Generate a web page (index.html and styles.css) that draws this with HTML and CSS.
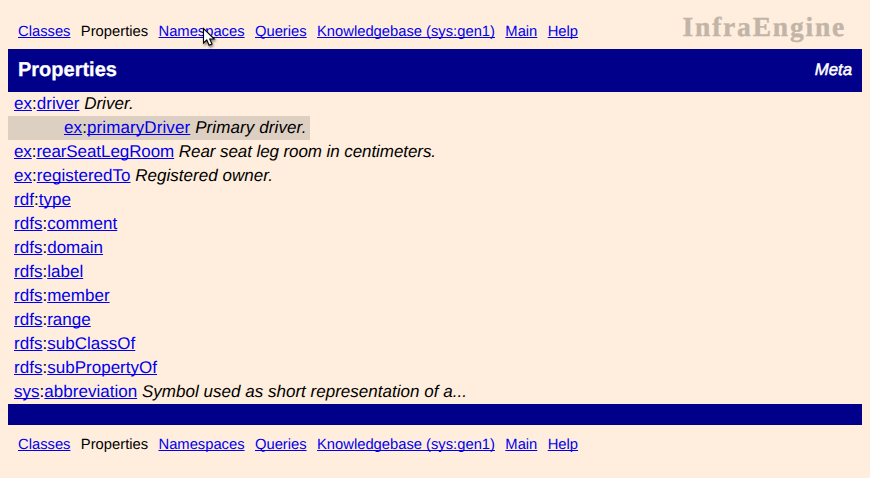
FILE: index.html
```html
<!DOCTYPE html>
<html lang="en">
<head>
<meta charset="utf-8">
<title>Properties</title>
<link rel="stylesheet" href="styles.css">
</head>
<body>
<header class="top">
<nav class="nav"><a href="#">Classes</a><span>Properties</span><a href="#">Namespaces</a><a href="#">Queries</a><a href="#">Knowledgebase (sys:gen1)</a><a href="#">Main</a><a href="#">Help</a></nav>
<div class="logo">InfraEngine</div>
</header>
<div class="title"><h1>Properties</h1><span class="meta">Meta</span></div>
<main class="list">
<div class="row"><a href="#">ex</a>:<a href="#">driver</a> <i>Driver.</i></div>
<div class="row sub"><a href="#">ex</a>:<a href="#">primaryDriver</a> <i>Primary driver.</i></div>
<div class="row tight"><a href="#">ex</a>:<a href="#">rearSeatLegRoom</a> <i>Rear seat leg room in centimeters.</i></div>
<div class="row"><a href="#">ex</a>:<a href="#">registeredTo</a> <i>Registered owner.</i></div>
<div class="row"><a href="#">rdf</a>:<a href="#">type</a></div>
<div class="row"><a href="#">rdfs</a>:<a href="#">comment</a></div>
<div class="row"><a href="#">rdfs</a>:<a href="#">domain</a></div>
<div class="row"><a href="#">rdfs</a>:<a href="#">label</a></div>
<div class="row"><a href="#">rdfs</a>:<a href="#">member</a></div>
<div class="row"><a href="#">rdfs</a>:<a href="#">range</a></div>
<div class="row"><a href="#">rdfs</a>:<a href="#">subClassOf</a></div>
<div class="row"><a href="#">rdfs</a>:<a href="#">subPropertyOf</a></div>
<div class="row"><a href="#">sys</a>:<a href="#">abbreviation</a> <i>Symbol used as short representation of a...</i></div>
</main>
<div class="bar"></div>
<nav class="nav bottom"><a href="#">Classes</a><span>Properties</span><a href="#">Namespaces</a><a href="#">Queries</a><a href="#">Knowledgebase (sys:gen1)</a><a href="#">Main</a><a href="#">Help</a></nav>
<svg class="cursor" width="16" height="22" viewBox="0 0 16 22"><path d="M1.5 1.5v14.5l3.3-3 2.3 5.2 2.9-1.2-2.3-5h4.6z" fill="#fff" stroke="#000" stroke-width="1.1"/></svg>
</body>
</html>
```
FILE: styles.css
```css
body {
  margin: 0;
  padding: 0 8px;
  background: #ffeedd;
  color: #000;
  font-family: "Liberation Sans", Arial, sans-serif;
  font-size: 17px;
  text-rendering: geometricPrecision;
}
a { color: #0000ee; text-decoration: underline; text-decoration-thickness: 1px; text-underline-offset: 1px; text-decoration-skip-ink: none; }
.top { display: flex; justify-content: space-between; height: 49px; }
.nav { display: flex; gap: 10.4px; padding: 22px 0 0 10px; font-size: 14.75px; line-height: 20px; white-space: nowrap; }
.logo {
  padding: 11px 16px 0 0;
  color: #c2b5a8;
  font: bold 27.5px/32px Baskerville, "Liberation Serif", serif;
  letter-spacing: 1.8px;
  -webkit-text-stroke: 0.4px #c2b5a8;
}
.title {
  display: flex;
  justify-content: space-between;
  height: 43px;
  padding: 0 10px 0 10px;
  background: #00008b;
  color: #fff;
  line-height: 42px;
}
h1 { margin: 0; font-size: 20px; -webkit-text-stroke: 0.3px #fff; }
.meta { font-size: 16.8px; font-style: italic; -webkit-text-stroke: 0.5px #fff; }
.row { height: 24px; padding-left: 6px; line-height: 23px; white-space: nowrap; letter-spacing: 0.02px; }
.sub { width: fit-content; padding: 0 3px 0 56px; background: #ddcfc2; letter-spacing: 0.1px; }
.tight { letter-spacing: -0.08px; }
.bar { height: 21px; background: #00008b; }
.bottom { padding-top: 10px; }
.cursor { position: absolute; left: 202px; top: 27px; filter: drop-shadow(1px 2px 1px rgba(0, 0, 0, 0.45)); }
```
